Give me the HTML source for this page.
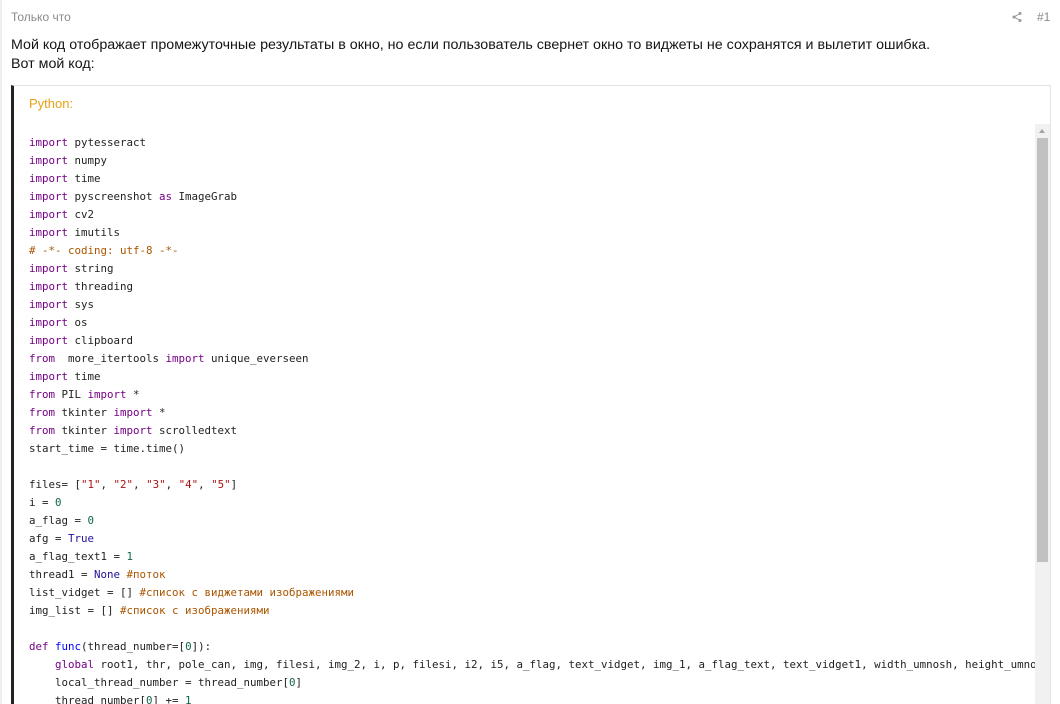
<!DOCTYPE html>
<html><head><meta charset="utf-8">
<style>
*{margin:0;padding:0;box-sizing:border-box}
html,body{width:1060px;height:704px;overflow:hidden;background:#fff}
body{position:relative;font-family:"Liberation Sans","DejaVu Sans",sans-serif}
.outer{position:absolute;left:0;top:0;width:2px;height:704px;background:#eee}
.time{position:absolute;left:11px;top:10px;font-size:12px;color:#8a8a8a}
.num{position:absolute;left:1037px;top:10px;font-size:12px;color:#8a8a8a}
.share{position:absolute;left:1011px;top:11px}
.txt{position:absolute;left:11px;top:36px;font-size:14.27px;line-height:19px;color:#141414}
.box{position:absolute;left:11px;top:85px;width:1040px;height:640px;border:1px solid #e3e3e3;border-left:3px solid #222;background:#fff}
.lang{position:absolute;left:29px;top:96px;font-size:13px;color:#e5a117}
.code{position:absolute;left:29px;top:134px;width:1006px;overflow:hidden;font-family:"DejaVu Sans Mono","Liberation Mono",monospace;font-size:10.8px;line-height:18px;color:#222;white-space:pre}
.k{color:#770088}.a{color:#221199}.n{color:#116644}.s{color:#aa1111}.c{color:#aa5500}.d{color:#0000ff}
.track{position:absolute;left:1035px;top:124px;width:15px;height:600px;background:#f1f1f1}
.thumb{position:absolute;left:1037px;top:138px;width:11px;height:424px;background:#c1c1c1}
.arrow{position:absolute;left:1039px;top:129px;width:0;height:0;border-left:3.5px solid transparent;border-right:3.5px solid transparent;border-bottom:4px solid #a3a3a3}
</style></head><body>
<div class="outer"></div>
<div class="time">Только что</div>
<svg class="share" width="12" height="12" viewBox="0 0 12 12"><circle cx="9" cy="2.5" r="1.5" fill="#999"/><circle cx="3" cy="6" r="1.5" fill="#999"/><circle cx="9" cy="9.5" r="1.5" fill="#999"/><path d="M9 2.5L3 6L9 9.5" stroke="#999" stroke-width="1" fill="none"/></svg>
<div class="num">#1</div>
<div class="txt">Мой код отображает промежуточные результаты в окно, но если пользователь свернет окно то виджеты не сохранятся и вылетит ошибка.<br>Вот мой код:</div>
<div class="box"></div>
<div class="lang">Python:</div>
<div class="code"><span class="k">import</span> pytesseract
<span class="k">import</span> numpy
<span class="k">import</span> time
<span class="k">import</span> pyscreenshot <span class="k">as</span> ImageGrab
<span class="k">import</span> cv2
<span class="k">import</span> imutils
<span class="c"># -*- coding: utf-8 -*-</span>
<span class="k">import</span> string
<span class="k">import</span> threading
<span class="k">import</span> sys
<span class="k">import</span> os
<span class="k">import</span> clipboard
<span class="k">from</span>  more_itertools <span class="k">import</span> unique_everseen
<span class="k">import</span> time
<span class="k">from</span> PIL <span class="k">import</span> *
<span class="k">from</span> tkinter <span class="k">import</span> *
<span class="k">from</span> tkinter <span class="k">import</span> scrolledtext
start_time = time.time()

files= [<span class="s">"1"</span>, <span class="s">"2"</span>, <span class="s">"3"</span>, <span class="s">"4"</span>, <span class="s">"5"</span>]
i = <span class="n">0</span>
a_flag = <span class="n">0</span>
afg = <span class="a">True</span>
a_flag_text1 = <span class="n">1</span>
thread1 = <span class="a">None</span> <span class="c">#поток</span>
list_vidget = [] <span class="c">#список с виджетами изображениями</span>
img_list = [] <span class="c">#список с изображениями</span>

<span class="k">def</span> <span class="d">func</span>(thread_number=[<span class="n">0</span>]):
    <span class="k">global</span> root1, thr, pole_can, img, filesi, img_2, i, p, filesi, i2, i5, a_flag, text_vidget, img_1, a_flag_text, text_vidget1, width_umnosh, height_umnosh
    local_thread_number = thread_number[<span class="n">0</span>]
    thread_number[<span class="n">0</span>] += <span class="n">1</span></div>
<div class="track"></div>
<div class="arrow"></div>
<div class="thumb"></div>
</body></html>
